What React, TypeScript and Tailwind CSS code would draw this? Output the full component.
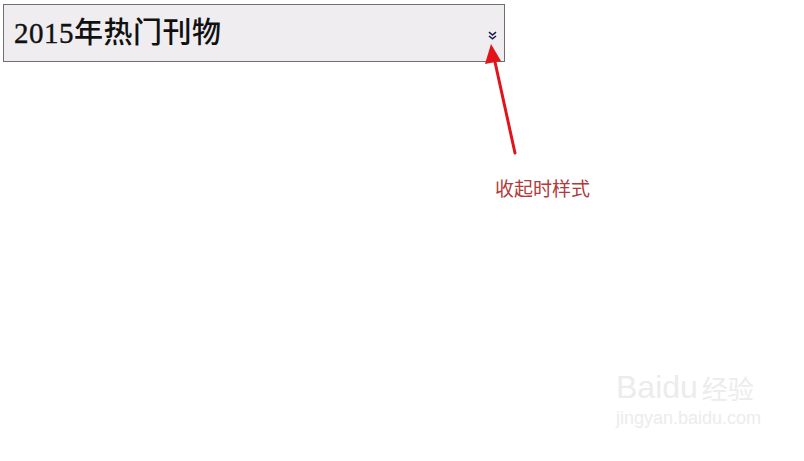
import React from "react"

const serif = { fontFamily: '"Liberation Serif", "Noto Sans CJK SC", serif' }

function DoubleChevron() {
  return (
    <svg width="9" height="9" viewBox="0 0 9 9" className="block">
      <path d="M1 1.2 L4.5 4 L8 1.2" fill="none" stroke="#1b1f4a" strokeWidth="1.6" />
      <path d="M1 5 L4.5 7.8 L8 5" fill="none" stroke="#1b1f4a" strokeWidth="1.6" />
    </svg>
  )
}

function CalloutArrow() {
  return (
    <svg width="804" height="461" className="absolute left-0 top-0 pointer-events-none">
      <line x1="515" y1="153" x2="495" y2="62" stroke="#e0141a" strokeWidth="3" strokeLinecap="round" />
      <polygon points="491,44 485,64 501,61" fill="#e0141a" />
    </svg>
  )
}

export default function App() {
  return (
    <div className="relative w-[804px] h-[461px] bg-white overflow-hidden">
      <div className="pt-[4px] pl-[3px]">
        <div className="w-[502px] h-[58px] border border-[#6f6f6f] bg-[#efedf0] flex items-center justify-between pl-[10px] pr-[7px]">
          <h2 className="text-[29px] font-medium tracking-[0.5px] text-[#111] leading-none pt-[1px]" style={serif}>
            <span className="[-webkit-text-stroke:0.4px_#111]">2015</span>年热门刊物
          </h2>
          <div className="pt-[5px]">
            <DoubleChevron />
          </div>
        </div>
      </div>

      <CalloutArrow />
      <p
        className="absolute left-[495px] top-[176px] text-[19px] text-[#b23a3a] leading-6"
        style={{ fontFamily: '"Noto Sans CJK SC", sans-serif' }}
      >
        收起时样式
      </p>

      {/* watermark */}
      <div className="absolute left-[616px] top-[371px] text-[#ececec] select-none" style={{ fontFamily: '"Liberation Sans", "Noto Sans CJK SC", sans-serif' }}>
        <div className="flex items-end gap-1">
          <span className="text-[32px] leading-none">Baidu</span>
          <span className="text-[26px] leading-none">经验</span>
        </div>
        <div className="text-[18px] leading-none mt-[6px]">jingyan.baidu.com</div>
      </div>
    </div>
  )
}
